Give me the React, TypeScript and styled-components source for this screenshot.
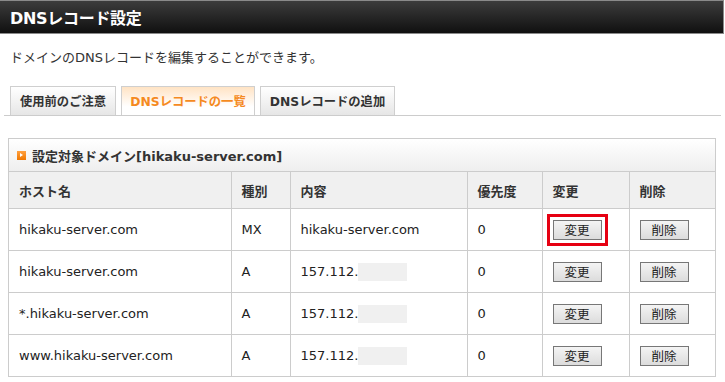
import React from "react";
import styled, { createGlobalStyle } from "styled-components";

const Global = createGlobalStyle`
  html, body { margin: 0; padding: 0; background: #fff; }
  body { font-family: "DejaVu Sans", "Noto Sans CJK JP", sans-serif; color: #333; }
`;

const Page = styled.div`
  width: 725px;
  height: 382px;
  overflow: hidden;
`;

const TitleBar = styled.div`
  height: 32px;
  border: 1px solid #8a8a8a;
  border-left: none;
  width: 713px;
  background: linear-gradient(#3c3c3c, #101010);
  display: flex;
  align-items: center;
  padding-left: 10px;
  box-sizing: content-box;
  color: #fff;
  font-weight: bold;
  font-size: 16px;
  letter-spacing: -0.3px;
`;

const Description = styled.p`
  margin: 0;
  padding: 15px 0 0 10px;
  font-size: 13px;
  line-height: 18px;
  color: #333;
`;

const TabBar = styled.div`
  margin: 19px 0 0 4px;
  width: 717px;
  display: flex;
  gap: 5px;
  padding-left: 6px;
  box-sizing: border-box;
  border-bottom: 1px solid #ccc;
  height: 30px;
  align-items: flex-end;
`;

const Tab = styled.div<{ $active?: boolean; $w: number }>`
  height: 29px;
  box-sizing: border-box;
  border: 1px solid #cfcfcf;
  border-bottom: none;
  background: ${(p) =>
    p.$active ? "linear-gradient(#ffe3c4, #ffffff 70%)" : "linear-gradient(#ffffff, #e6e6e6)"};
  color: ${(p) => (p.$active ? "#f58a1f" : "#333")};
  font-weight: bold;
  font-size: 12.3px;
  display: flex;
  align-items: center;
  justify-content: center;
  width: ${(p) => p.$w}px;
`;

const TableBox = styled.div`
  margin: 22px 0 0 8px;
  width: 708px;
  box-sizing: border-box;
  border: 1px solid #ccc;
`;

const Caption = styled.div`
  height: 32px;
  background: linear-gradient(#ffffff, #eeeeee);
  border-bottom: 1px solid #ccc;
  display: flex;
  align-items: center;
  padding-left: 8px;
  gap: 6px;
  font-weight: bold;
  font-size: 13px;
  color: #333;
`;

const CapIcon = styled.span`
  width: 9px;
  height: 9px;
  background: linear-gradient(#ffa040, #f07800);
  display: inline-flex;
  align-items: center;
  justify-content: center;
  &::after {
    content: "";
    border-left: 3px solid #fff;
    border-top: 2.5px solid transparent;
    border-bottom: 2.5px solid transparent;
  }
`;

const Table = styled.table`
  width: 100%;
  border-collapse: collapse;
  table-layout: fixed;
  font-size: 13px;
`;

const Th = styled.th`
  background: #f0f0f0;
  text-align: left;
  font-weight: bold;
  height: 36px;
  padding: 0 0 0 10px;
  border-left: 1px solid #ccc;
  border-bottom: 1px solid #ccc;
  &:first-child { border-left: none; }
  color: #333;
`;

const Td = styled.td`
  height: 41px;
  padding: 0 0 0 10px;
  border-left: 1px solid #ccc;
  border-bottom: 1px solid #ccc;
  &:first-child { border-left: none; }
  color: #222;
  tr:last-child > & { border-bottom: none; }
`;

const Masked = styled.span`
  display: inline-block;
  width: 49px;
  height: 18px;
  background: #f0f0f0;
  vertical-align: middle;
`;

const Highlight = styled.span<{ $on?: boolean }>`
  display: inline-block;
  padding: 3px;
  margin: -6px;
  border: 3px solid ${(p) => (p.$on ? "#e60012" : "transparent")};
`;

const Btn = styled.button`
  width: 49px;
  height: 20px;
  padding: 0;
  border: 1px solid #777;
  background: linear-gradient(#f4f4f4, #dcdcdc);
  font-family: "Noto Sans CJK JP", sans-serif;
  font-size: 12.5px;
  color: #222;
  line-height: 18px;
`;

const rows = [
  { host: "hikaku-server.com", type: "MX", content: "hikaku-server.com", mask: false },
  { host: "hikaku-server.com", type: "A", content: "157.112.", mask: true },
  { host: "*.hikaku-server.com", type: "A", content: "157.112.", mask: true },
  { host: "www.hikaku-server.com", type: "A", content: "157.112.", mask: true },
];

export default function App() {
  return (
    <Page>
      <Global />
      <TitleBar>DNSレコード設定</TitleBar>
      <Description>ドメインのDNSレコードを編集することができます。</Description>
      <TabBar>
        <Tab $w={106}>使用前のご注意</Tab>
        <Tab $w={134} $active>DNSレコードの一覧</Tab>
        <Tab $w={135}>DNSレコードの追加</Tab>
      </TabBar>
      <TableBox>
        <Caption>
          <CapIcon />
          設定対象ドメイン[hikaku-server.com]
        </Caption>
        <Table>
          <colgroup>
            <col style={{ width: 222 }} />
            <col style={{ width: 59 }} />
            <col style={{ width: 177 }} />
            <col style={{ width: 75 }} />
            <col style={{ width: 87 }} />
            <col />
          </colgroup>
          <thead>
            <tr>
              <Th>ホスト名</Th>
              <Th>種別</Th>
              <Th>内容</Th>
              <Th>優先度</Th>
              <Th>変更</Th>
              <Th>削除</Th>
            </tr>
          </thead>
          <tbody>
            {rows.map((r, i) => (
              <tr key={i}>
                <Td>{r.host}</Td>
                <Td>{r.type}</Td>
                <Td>
                  {r.content}
                  {r.mask && <Masked />}
                </Td>
                <Td>0</Td>
                <Td>
                  <Highlight $on={i === 0}>
                    <Btn>変更</Btn>
                  </Highlight>
                </Td>
                <Td>
                  <Btn>削除</Btn>
                </Td>
              </tr>
            ))}
          </tbody>
        </Table>
      </TableBox>
    </Page>
  );
}
